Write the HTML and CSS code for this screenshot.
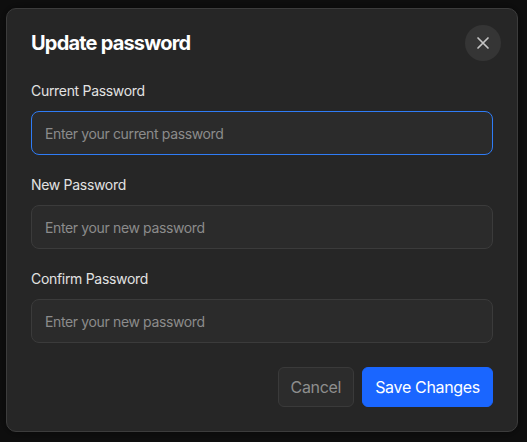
FILE: index.html
```html
<!DOCTYPE html>
<html lang="en">
<head>
<meta charset="utf-8">
<title>Update password</title>
<link rel="stylesheet" href="styles.css">
</head>
<body>
<div class="dialog">
  <div class="header">
    <h2 class="title">Update password</h2>
    <button class="close" aria-label="Close">
      <svg width="14" height="14" viewBox="0 0 14 14"><path d="M2 2L12 12M12 2L2 12" stroke="#c4c4c4" stroke-width="1.7" stroke-linecap="round" fill="none"/></svg>
    </button>
  </div>
  <div class="fields">
    <div class="field">
      <label class="label">Current Password</label>
      <div class="input focused">Enter your current password</div>
    </div>
    <div class="field">
      <label class="label">New Password</label>
      <div class="input">Enter your new password</div>
    </div>
    <div class="field">
      <label class="label">Confirm Password</label>
      <div class="input">Enter your new password</div>
    </div>
  </div>
  <div class="actions">
    <button class="btn cancel">Cancel</button>
    <button class="btn save">Save Changes</button>
  </div>
</div>
</body>
</html>
```

FILE: styles.css
```css
html, body {
  margin: 0;
  padding: 0;
  background: #0f0f0f;
  font-family: Inter, "Liberation Sans", sans-serif;
  height: 100%;
}
body {
  padding: 8px 0 0 6px;
  box-sizing: border-box;
}
.dialog {
  width: 512px;
  box-sizing: border-box;
  background: #262626;
  border: 1px solid #3c3c3c;
  border-radius: 10px;
  padding: 16px 24px 24px 24px;
  box-shadow: 0 0 12px rgba(0,0,0,0.5);
}
.header {
  display: flex;
  align-items: center;
  justify-content: space-between;
  height: 36px;
}
.title {
  margin: 0;
  font-size: 20px;
  line-height: 28px;
  font-weight: 700;
  color: #ffffff;
  letter-spacing: -0.04em;
}
.close {
  width: 36px;
  height: 36px;
  border-radius: 50%;
  border: none;
  background: #353535;
  margin-right: -8px;
  display: flex;
  align-items: center;
  justify-content: center;
  padding: 0;
}
.fields {
  display: flex;
  flex-direction: column;
  gap: 20px;
  margin-top: 20px;
}
.field {
  display: flex;
  flex-direction: column;
  gap: 10px;
}
.label {
  font-size: 14px;
  line-height: 20px;
  color: #e2e2e2;
  letter-spacing: -0.022em;
}
.input {
  height: 44px;
  box-sizing: border-box;
  border: 1px solid #3b3b3b;
  background: #2b2b2b;
  border-radius: 8px;
  padding: 0 13px;
  display: flex;
  align-items: center;
  font-size: 14px;
  color: #8c8c8c;
  letter-spacing: -0.026em;
}
.input.focused {
  border-color: #2f7cf6;
}
.actions {
  display: flex;
  justify-content: flex-end;
  gap: 8px;
  margin-top: 24px;
}
.btn {
  height: 40px;
  border-radius: 6px;
  font-family: Inter, "Liberation Sans", sans-serif;
  font-size: 16px;
  letter-spacing: -0.02em;
  padding: 0 12px;
}
.cancel {
  background: #2c2c2c;
  border: 1px solid #3a3a3a;
  color: #8e8e8e;
}
.save {
  background: #1a66ff;
  border: 1px solid #1a66ff;
  color: #ffffff;
}
```
